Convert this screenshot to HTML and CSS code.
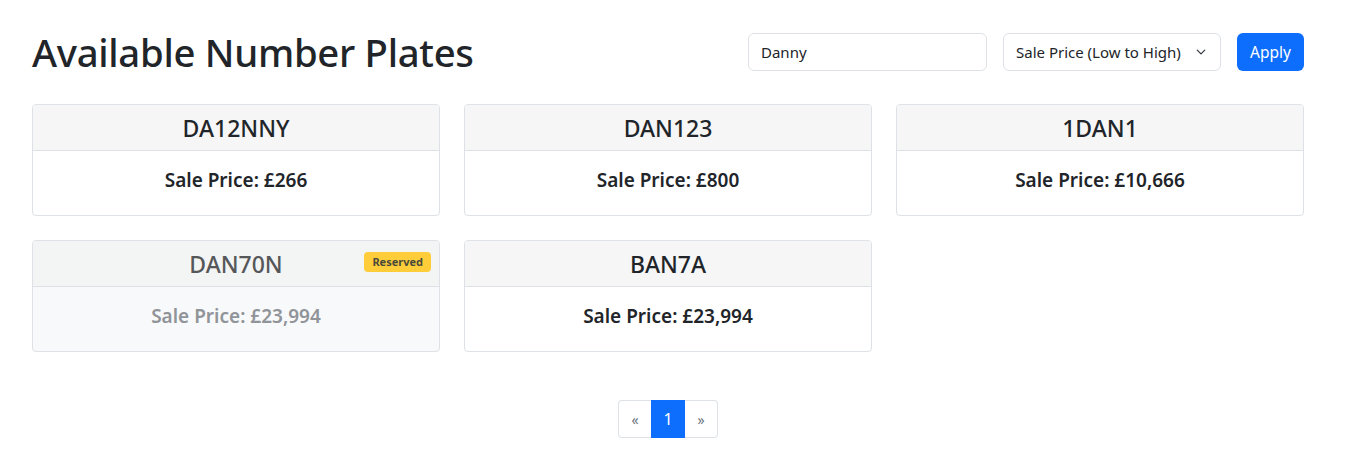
FILE: index.html
```html
<!DOCTYPE html>
<html lang="en">
<head>
<meta charset="utf-8">
<title>Available Number Plates</title>
<link rel="stylesheet" href="styles.css">
</head>
<body>
<main class="page">
  <header class="top">
    <h1 class="title">Available Number Plates</h1>
    <form class="filters">
      <input class="search" type="text" value="Danny">
      <div class="select">
        <span>Sale Price (Low to High)</span>
        <svg class="chev" width="10" height="10" viewBox="0 0 16 16"><path d="M2 5l6 6 6-6" fill="none" stroke="#343a40" stroke-width="2" stroke-linecap="round" stroke-linejoin="round"/></svg>
      </div>
      <button class="apply" type="button">Apply</button>
    </form>
  </header>

  <section class="grid">
    <article class="card">
      <div class="card-head">DA12NNY</div>
      <div class="card-body">Sale Price: £266</div>
    </article>
    <article class="card">
      <div class="card-head">DAN123</div>
      <div class="card-body">Sale Price: £800</div>
    </article>
    <article class="card">
      <div class="card-head">1DAN1</div>
      <div class="card-body">Sale Price: £10,666</div>
    </article>
    <article class="card reserved">
      <div class="card-head">DAN70N<span class="badge">Reserved</span></div>
      <div class="card-body">Sale Price: £23,994</div>
    </article>
    <article class="card">
      <div class="card-head">BAN7A</div>
      <div class="card-body">Sale Price: £23,994</div>
    </article>
  </section>

  <nav class="pager">
    <span class="pg">«</span>
    <span class="pg active">1</span>
    <span class="pg">»</span>
  </nav>
</main>
</body>
</html>
```

FILE: styles.css
```css
* { box-sizing: border-box; }
html, body { margin: 0; padding: 0; background: #fff; }
body {
  font-family: "Noto Sans", "Open Sans", sans-serif;
  color: #212529;
}
.page {
  padding: 28px 41px 0 32px;
}
.top {
  display: flex;
  align-items: center;
  justify-content: space-between;
  height: 48px;
}
.title {
  margin: 0;
  font-size: 38.3px;
  font-weight: 500;
  line-height: 48px;
  letter-spacing: -0.3px;
}
.filters {
  display: flex;
  gap: 16px;
  align-items: center;
}
.search {
  width: 239px;
  height: 38px;
  border: 1px solid #dee2e6;
  border-radius: 6px;
  padding: 0 12px;
  font: inherit;
  font-size: 15px;
  color: #212529;
}
.select {
  width: 218px;
  height: 38px;
  border: 1px solid #dee2e6;
  border-radius: 6px;
  padding: 0 14px 0 12px;
  display: flex;
  align-items: center;
  justify-content: space-between;
  font-size: 15px;
}
.apply {
  height: 38px;
  width: 67px;
  border: none;
  border-radius: 6px;
  background: #0d6efd;
  color: #fff;
  font: inherit;
  font-size: 15.5px;
}
.grid {
  margin-top: 28px;
  display: grid;
  grid-template-columns: repeat(3, 408px);
  column-gap: 24px;
  row-gap: 24px;
}
.card {
  border: 1px solid #dee2e6;
  border-radius: 4px;
  height: 112px;
  display: flex;
  flex-direction: column;
  overflow: hidden;
}
.card-head {
  position: relative;
  height: 46px;
  background: #f6f6f6;
  border-bottom: 1px solid #dee2e6;
  display: flex;
  align-items: center;
  justify-content: center;
  font-size: 23px;
  font-weight: 500;
}
.card-body {
  flex: 1;
  display: flex;
  align-items: center;
  justify-content: center;
  font-size: 19px;
  font-weight: 600;
  padding-bottom: 6px;
}
.reserved { background: #f8f9fa; }
.reserved .card-head { color: #555759; background: #f3f4f4; }
.reserved .card-body { color: #909499; }
.badge {
  position: absolute;
  right: 8px;
  top: 11px;
  background: #ffcd39;
  color: #4a4a3a;
  font-size: 11px;
  font-weight: 700;
  border-radius: 4px;
  padding: 2px 8px;
  line-height: 16px;
}
.pager {
  margin-top: 48px;
  display: flex;
  justify-content: center;
}
.pager .pg {
  width: 34px;
  height: 38px;
  display: flex;
  align-items: center;
  justify-content: center;
  border: 1px solid #dee2e6;
  color: #6c757d;
  font-size: 14px;
}
.pager .pg:first-child { border-radius: 4px 0 0 4px; border-right: none; width: 33px; }
.pager .pg:last-child { border-radius: 0 4px 4px 0; border-left: none; width: 33px; }
.pager .active {
  background: #0d6efd;
  border-color: #0d6efd;
  color: #fff;
  font-size: 16px;
}
```
